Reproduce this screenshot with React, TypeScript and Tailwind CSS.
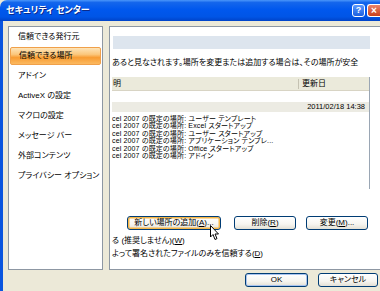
import React from 'react';

const navItems = [
  '信頼できる発行元',
  '信頼できる場所',
  'アドイン',
  'ActiveX の設定',
  'マクロの設定',
  'メッセージ バー',
  '外部コンテンツ',
  'プライバシー オプション',
];

const rows = [
  'cel 2007 の既定の場所: ユーザー テンプレート',
  'cel 2007 の既定の場所: Excel スタートアップ',
  'cel 2007 の既定の場所: ユーザー スタートアップ',
  'cel 2007 の既定の場所: アプリケーション テンプレ...',
  'cel 2007 の既定の場所: Office スタートアップ',
  'cel 2007 の既定の場所: アドイン',
];

function XpButton({ children, className = '', hot = false, def = false }: { children: React.ReactNode; className?: string; hot?: boolean; def?: boolean }) {
  return (
    <div
      className={`h-[14px] shrink-0 rounded-[3px] border border-[#003c74] bg-[linear-gradient(to_bottom,#ffffff_0%,#f6f5f0_60%,#e3e0d5_100%)] flex items-center justify-center leading-none ${
        hot ? 'shadow-[inset_0_0_0_1.5px_#f5b648]' : def ? 'shadow-[inset_0_0_0_1px_#a9c4ef]' : ''
      } ${className}`}
    >
      {children}
    </div>
  );
}

export default function App() {
  return (
    <div className="relative w-[380px] h-[291px] overflow-hidden bg-[#ece9d8] flex flex-col text-[8px] text-black font-['Liberation_Sans','Noto_Sans_CJK_JP',sans-serif] [font-feature-settings:'palt']">
      {/* Title bar */}
      <div className="h-[21px] shrink-0 rounded-tl-[7px] bg-[linear-gradient(to_bottom,#4a96fa_0%,#1466ec_12%,#0058ee_45%,#0055e6_80%,#0043c8_100%)] flex items-center pl-[6px]">
        <span className="text-white font-bold text-[9px] [text-shadow:1px_1px_0_#0b2a8a]">セキュリティ センター</span>
        <div className="ml-auto flex items-center gap-[2px]">
          <div className="w-[13px] h-[13px] rounded-[3px] border border-white bg-[linear-gradient(to_bottom,#5b9bff,#1c5fe0)] text-white font-bold text-[9px] flex items-center justify-center leading-none">
            ?
          </div>
          <div className="w-[13px] h-[13px] rounded-l-[3px] border border-r-0 border-white bg-[linear-gradient(to_bottom,#e9846a,#c8401c)] text-white font-bold text-[10px] flex items-center justify-center leading-none">
            ×
          </div>
        </div>
      </div>

      <div className="flex-1 border-l-[3px] border-[#0a55df] flex flex-col">
        <div className="flex gap-[6px] pl-[5px] pt-[5px]">
          {/* Left nav */}
          <div className="w-[95px] h-[244px] shrink-0 bg-white border border-[#8d97a3] flex flex-col">
            {navItems.map((item, i) => (
              <div key={item} className="h-[20px] flex items-start px-[1px]">
                <div
                  className={`h-[18px] w-full flex items-center pl-[8px] ${
                    i === 0 ? 'mt-[1px]' : ''
                  } ${
                    i === 1
                      ? 'rounded-[2px] bg-[linear-gradient(to_bottom,#fde4b8_0%,#fbc77c_40%,#f89c32_60%,#fbb960_100%)] border border-[#f0a04a]'
                      : ''
                  }`}
                >
                  {item}
                </div>
              </div>
            ))}
          </div>

          {/* Right panel */}
          <div className="w-[280px] h-[244px] shrink-0 bg-white border border-[#8d97a3] flex flex-col">
            <div className="ml-[3px] mt-[9px] w-[257px] h-[13px] bg-[#dde5ee]" />
            <div className="pl-[2px] mt-[9px] h-[10px] leading-[10px] whitespace-nowrap">
              あると見なされます。場所を変更または追加する場合は、その場所が安全
            </div>

            {/* List */}
            <div className="ml-[2px] mt-[9px] w-[258px] h-[112px] border-r border-[#9aa6b4] flex flex-col text-[7px]">
              <div className="h-[14px] bg-[#ebeadb] border-b border-[#d8d4c4] flex items-center">
                <div className="w-[186px] pl-[1px] text-[8px]">明</div>
                <div className="w-px h-[10px] bg-[#c5c2b2]" />
                <div className="pl-[3px] text-[8px]">更新日</div>
              </div>
              <div className="h-[11px]" />
              <div className="h-[10px] bg-[#ecebe3] flex items-center justify-end pr-[4px] text-[7.5px]">2011/02/18 14:38</div>
              <div className="mt-[3px] flex flex-col">
                {rows.map((r) => (
                  <div key={r} className="h-[7.4px] leading-[7.4px] whitespace-nowrap tracking-[0.15px]">
                    {r}
                  </div>
                ))}
              </div>
            </div>

            {/* Action buttons */}
            <div className="mt-[27px] flex pl-[17px]">
              <XpButton hot className="w-[94px]">
                新しい場所の追加(<u>A</u>)...
              </XpButton>
              <XpButton className="w-[62px] ml-[13px]">
                削除(<u>R</u>)
              </XpButton>
              <XpButton className="w-[62px] ml-[10px]">
                変更(<u>M</u>)...
              </XpButton>
            </div>

            <div className="pl-[2px] mt-[6px] h-[9px] leading-[9px] whitespace-nowrap">
              る (推奨しません)(<u>W</u>)
            </div>
            <div className="pl-[2px] mt-[4px] h-[9px] leading-[9px] whitespace-nowrap">
              よって署名されたファイルのみを信頼する(<u>D</u>)
            </div>
          </div>
        </div>

        {/* Dialog buttons */}
        <div className="mt-[3px] flex justify-end gap-[10px] pr-[2px]">
          <XpButton def className="w-[63px]">OK</XpButton>
          <XpButton className="w-[60px]">キャンセル</XpButton>
        </div>
      </div>

      {/* Mouse cursor */}
      <svg className="absolute left-[210px] top-[225px]" width="10" height="16" viewBox="0 0 10 16">
        <path d="M0.5 0.5 L0.5 12 L3 9.5 L5 14.5 L7 13.6 L5 9 L8.5 9 Z" fill="white" stroke="black" strokeWidth="1" strokeLinejoin="miter" />
      </svg>
    </div>
  );
}
